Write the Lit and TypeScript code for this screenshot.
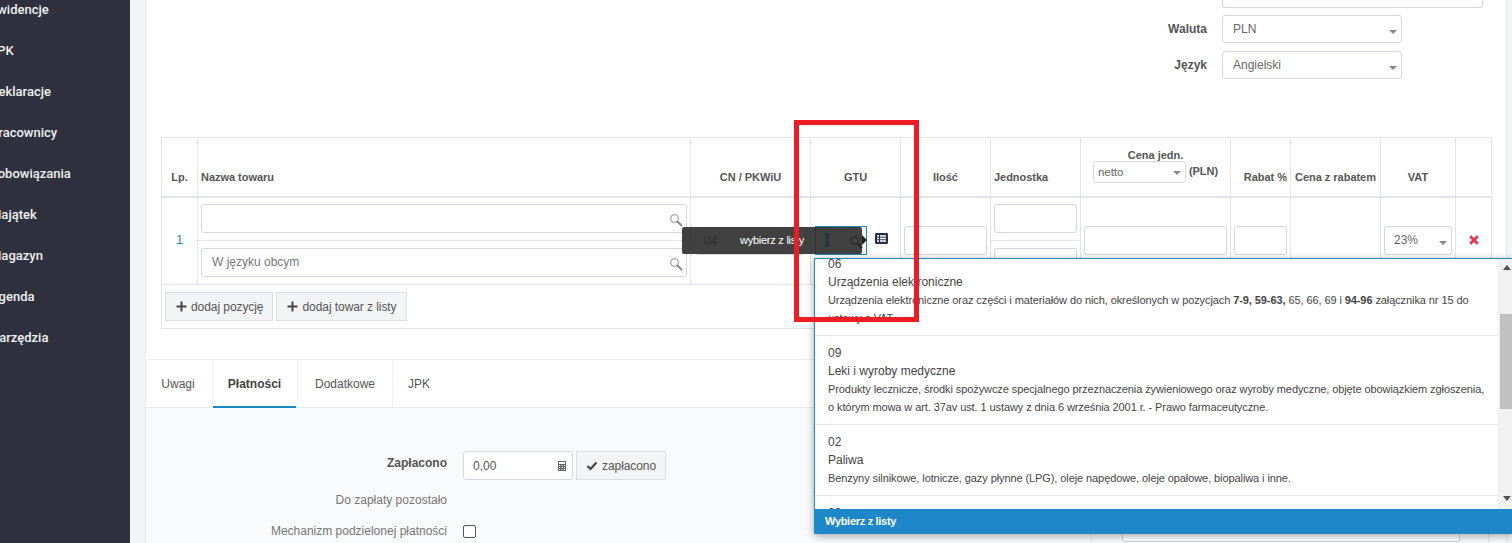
import { LitElement, html, css } from "lit";
import { customElement } from "lit/decorators.js";

const search = html`<svg class="search" viewBox="0 0 14 14" width="14" height="14"><circle cx="5.500" cy="5.500" r="3.800" fill="none" stroke="#aaa" stroke-width="1.300"/><path d="M8.500 8.500L12.500 12.500" stroke="#8a8a8a" stroke-width="2" stroke-linecap="round"/></svg>`;

@customElement("app-root")
export class AppRoot extends LitElement {
  static styles = css`
    :host { display: block; width: 1512px; height: 543px; overflow: hidden; position: relative; font-family: "Liberation Sans", Arial, sans-serif; font-size: 12px; color: #555; background: #f3f4f6; }
    * { box-sizing: border-box; }
    .shell { display: flex; height: 543px; overflow: hidden; }
    .side { width: 130px; flex: none; background: #2f323e; font-family: "Roboto", sans-serif; font-size: 13px; font-weight: 500; display: flex; flex-direction: column; overflow: hidden; padding-top: 1px; }
    .side div { height: 41px; line-height: 18px; white-space: nowrap; flex: none; margin-left: -10px; color: #eef0f3; }
    .gutter { width: 15px; flex: none; }
    .main { width: 1362px; flex: none; background: #fff; border-left: 1px solid #e6e8ec; border-right: 1px solid #e6e8ec; height: 543px; overflow: hidden; position: relative; }
    .head { height: 137px; display: flex; flex-direction: column; align-items: flex-start; padding-left: 1008px; }
    .field { display: flex; align-items: center; margin-bottom: 8px; }
    .f0 { height: 8px; margin-left: 68px; width: 261px; border: 1px solid #d5d8dd; border-top: none; border-radius: 0 0 3px 3px; margin-bottom: 7px; }
    .field label { width: 55px; text-align: right; margin-right: 15px; margin-left: -2px; font-weight: 700; color: #555; font-size: 12px; }
    .select { position: relative; border: 1px solid #d5d8dd; border-radius: 3px; background: #fff; color: #666; font-size: 12px; display: flex; align-items: center; }
    .select::after { content: ""; position: absolute; right: 4px; top: 14px; border: 4px solid transparent; border-top-color: #888; }
    .sel-head { width: 180px; height: 28px; padding: 0 10px 1px; }
    table { border-collapse: collapse; table-layout: fixed; width: 1330px; margin-left: 15px; font-size: 11px; }
    th, td { border: 1px solid #e2e4e9; padding: 0; }
    th { height: 59px; border-bottom-width: 2px; vertical-align: bottom; padding-bottom: 13px; font-weight: 700; color: #555; text-align: center; letter-spacing: -0.03px; }
    th.l { text-align: left; padding-left: 3px; }
    th.rab { text-align: right; padding-right: 3px; }
    td { text-align: center; vertical-align: middle; }
    tr.r td { height: 44px; }
    .input { position: relative; border: 1px solid #d5d8dd; border-radius: 3px; background: #fff; height: 29px; margin: 0 3px; text-align: left; padding: 0 10px 2px; display: flex; align-items: center; color: #777; font-size: 12px; }
    .cn { margin: 0 4px; height: 28px; padding: 0 8px; color: #333; }
    .search { position: absolute; right: 3px; top: 8px; }
    .lp { color: #1c7fc4; font-size: 12px; padding-bottom: 2px; }
    .mini { display: inline-flex; width: 93px; height: 22px; padding: 0 4px; font-size: 11.500px; font-weight: 400; vertical-align: middle; margin-right: 3px; }
    .mini::after { top: 9px; }
    .vat { margin: 0 3px; width: 68px; height: 29px; padding: 0 9px 2px; font-size: 12px; }
    .cenah { padding-bottom: 13px; }
    .cenah > div:first-child { line-height: 12px; }
    .del { display: block; margin: -2px auto 0; }
    .foot { padding: 7px 3px; text-align: left; height: 44px; }
    .btn { display: inline-flex; align-items: center; gap: 4px; height: 29px; padding: 0 9px 0 10px; border: 1px solid #dcdee2; background: #f3f4f6; color: #555; font-size: 12px; margin-right: 3px; white-space: nowrap; letter-spacing: -0.07px; }
    .btn svg { flex: none; }
    .tabs { margin-top: 30px; height: 49px; border-top: 1px solid #eef0f2; border-bottom: 1px solid #e6e8ec; display: flex; }
    .tab { height: 47px; display: flex; align-items: center; justify-content: center; font-size: 12px; color: #555; flex: none; }
    .t-u { width: 67px; border-right: 1px solid #eef0f2; padding-right: 2px; }
    .t-p { width: 83px; margin-right: 1px; color: #444; font-weight: 700; border-bottom: 2px solid #1e87c9; height: 48px; padding-top: 1px; }
    .t-d { width: 96px; border-left: 1px solid #eef0f2; border-right: 1px solid #eef0f2; }
    .t-j { width: 52px; }
    .panel { background: #f9fafc; height: 135px; display: flex; }
    .pleft { width: 945px; flex: none; padding-top: 43px; }
    .pright { width: 398px; flex: none; border-left: 1px solid #e6e8ec; border-right: 1px solid #e6e8ec; padding-left: 30px; }
    .pbox { width: 338px; height: 134px; border: 1px solid #cfd2d6; background: #fff; border-radius: 0 0 2px 2px; }
    .row { display: flex; align-items: center; }
    .row label { width: 301px; text-align: right; margin-right: 16px; color: #777; font-size: 12px; line-height: 14px; }
    .row label.b { font-weight: 700; color: #555; margin-bottom: 6px; }
    .pay { width: 110px; height: 29px; border: 1px solid #d5d8dd; border-radius: 3px; background: #fff; display: flex; align-items: center; justify-content: space-between; padding: 0 6px 0 9px; color: #555; font-size: 12px; }
    .paybtn { margin-left: 3px; width: 90px; padding: 0 9px; gap: 4px; }
    .check { width: 13px; height: 13px; border: 1px solid #555; border-radius: 2px; background: #fff; }
    .r2 { margin-top: 13px; }
    .r3 { margin-top: 17px; }
    .tip { position: absolute; left: 682px; top: 227px; width: 180px; height: 27px; background: rgba(44,44,44,.9); border-radius: 2px; color: #fff; font-size: 11px; letter-spacing: -0.25px; display: flex; align-items: center; padding: 0 0 1px 58px; z-index: 3; }
    .tip::after { content: ""; position: absolute; left: 100%; top: 8px; border: 5px solid transparent; border-left-color: #222; border-right-width: 0; }
    .dd { position: absolute; left: 814px; top: 258px; width: 698px; height: 276px; background: #fff; border-top: 1px solid #1e87c9; border-left: 1px solid #1e87c9; box-shadow: 0 2px 8px rgba(0,0,0,.35); z-index: 4; display: flex; flex-direction: column; overflow: hidden; }
    .list { flex: 1; overflow: hidden; position: relative; min-height: 0; }
    .scroller { margin-top: -4px; padding-right: 14px; }
    .item { padding: 0 12px 0 13px; border-bottom: 1px solid #e6e8ec; font-size: 11px; letter-spacing: -0.09px; color: #444; }
    .item div { height: 18px; line-height: 18px; white-space: nowrap; }
    .item .t, .item .n { font-size: 12px; letter-spacing: 0; }
    .i1 { height: 81px; }
    .i2 { height: 89px; padding-top: 8px; }
    .i3 { height: 71px; padding-top: 8px; }
    .i4 { height: 60px; padding-top: 8px; }
    .ddf { flex: none; height: 25px; background: #1e87c9; color: #fff; font-weight: 700; font-size: 11px; letter-spacing: -0.3px; display: flex; align-items: center; padding: 0 0 2px 10px; }
    .sb { position: absolute; top: 0; right: 0; width: 14px; bottom: 0; background: #f1f1f1; z-index: 5; }
    .thumb { position: absolute; top: 55px; left: 2px; right: 0; height: 95px; background: #c1c1c1; }
    .up, .down { position: absolute; left: 5px; width: 0; height: 0; border: 4px solid transparent; }
    .up { top: 6px; border-bottom: 5px solid #505050; border-top-width: 0; }
    .down { bottom: 8px; border-top: 5px solid #505050; border-bottom-width: 0; }
    .red { position: absolute; left: 794px; top: 120px; width: 125px; height: 202px; border: 5px solid #ed1c24; z-index: 6; }
    .ico { position: absolute; left: 875px; top: 233px; z-index: 2; }
    .gtu { position: relative; height: 29px; margin: 0 0 0 4px; border: 1px solid #1e87c9; width: 52px; background: #fff; }
    .gtu .search circle { stroke: #222; }
    .gtu .search path { stroke: #111; }
    .cursor { position: absolute; left: 9px; top: 6px; width: 4px; height: 14px; background: linear-gradient(#26344c 46%, #3a3a3a 46% 54%, #26344c 54%); z-index: 4; }
  `;

  render() {
    const side = ["Ewidencje", "JPK", "Deklaracje", "Pracownicy", "Zobowiązania", "Majątek", "Magazyn", "Agenda", "Narzędzia"];
    const plus = html`<svg width="11" height="11" viewBox="0 0 11 11"><path d="M5.500 0.500v10M0.500 5.500h10" stroke="#444" stroke-width="2"/></svg>`;
    return html`
      <div class="shell">
        <nav class="side">
          ${side.map((s) => html`<div>${s}</div>`)}
        </nav>
        <div class="gutter"></div>
        <main class="main">
          <div class="head">
            <div class="f0"></div>
            <div class="field"><label>Waluta</label><div class="select sel-head">PLN</div></div>
            <div class="field"><label>Język</label><div class="select sel-head">Angielski</div></div>
          </div>
          <table>
            <colgroup>
              <col style="width:36px"/><col style="width:493px"/><col style="width:120px"/><col style="width:90px"/><col style="width:90px"/><col style="width:90px"/><col style="width:150px"/><col style="width:60px"/><col style="width:90px"/><col style="width:75px"/><col style="width:36px"/>
            </colgroup>
            <tr>
              <th>Lp.</th><th class="l">Nazwa towaru</th><th>CN / PKWiU</th><th>GTU</th><th>Ilość</th><th class="l">Jednostka</th>
              <th class="cenah"><div>Cena jedn.</div><div class="select mini">netto</div>(PLN)</th>
              <th class="rab">Rabat %</th><th>Cena z rabatem</th><th>VAT</th><th></th>
            </tr>
            <tr class="r">
              <td rowspan="2" class="lp">1</td>
              <td><div class="input">${search}</div></td>
              <td rowspan="2"><div class="input cn">04</div></td>
              <td rowspan="2"><div class="gtu"><i class="cursor"></i>${search}</div></td>
              <td rowspan="2"><div class="input"></div></td>
              <td><div class="input"></div></td>
              <td rowspan="2"><div class="input"></div></td>
              <td rowspan="2"><div class="input"></div></td>
              <td rowspan="2"></td>
              <td rowspan="2"><div class="select vat">23%</div></td>
              <td rowspan="2"><svg class="del" width="10" height="10" viewBox="0 0 10 10"><path d="M1.200 1.200l7.600 7.600M8.800 1.200l-7.600 7.600" stroke="#e03a4e" stroke-width="2.800"/></svg></td>
            </tr>
            <tr class="r">
              <td><div class="input">W języku obcym${search}</div></td>
              <td><div class="input"></div></td>
            </tr>
            <tr>
              <td colspan="11" class="foot">
                <span class="btn">${plus}dodaj pozycję</span><span class="btn">${plus}dodaj towar z listy</span>
              </td>
            </tr>
          </table>
          <div class="tabs">
            <div class="tab t-u">Uwagi</div>
            <div class="tab t-p">Płatności</div>
            <div class="tab t-d">Dodatkowe</div>
            <div class="tab t-j">JPK</div>
          </div>
          <div class="panel">
            <div class="pleft">
              <div class="row"><label class="b">Zapłacono</label><div class="pay">0,00
                <svg width="8" height="10" viewBox="0 0 8 10"><path fill="#666" d="M0 0h8v10H0zM1 1v2h6V1zM1 4v1h1V4zm2.500 0v1h1V4zM6 4v1h1V4zM1 6v1h1V6zm2.500 0v1h1V6zM6 6v1h1V6zM1 8v1h1V8zm2.500 0v1h1V8zM6 8v1h1V8z" fill-rule="evenodd"/></svg></div>
                <span class="btn paybtn"><svg width="12" height="10" viewBox="0 0 12 10"><path d="M1.500 5l3 3 6-6.500" fill="none" stroke="#444" stroke-width="2.200"/></svg>zapłacono</span></div>
              <div class="row r2"><label>Do zapłaty pozostało</label></div>
              <div class="row r3"><label>Mechanizm podzielonej płatności</label><div class="check"></div></div>
            </div>
            <div class="pright"><div class="pbox"></div></div>
          </div>
        </main>
      </div>
      <svg class="ico" width="13" height="11" viewBox="0 0 13 12" preserveAspectRatio="none"><path fill="#27304a" fill-rule="evenodd" d="M1.500 0h10A1.500 1.500 0 0 1 13 1.500v9a1.500 1.500 0 0 1-1.500 1.500h-10A1.500 1.500 0 0 1 0 10.500v-9A1.500 1.500 0 0 1 1.500 0zM2 2.500v1.500h2V2.500zm3 0v1.500h6V2.500zM2 5.200v1.500h2V5.200zm3 0v1.500h6V5.200zM2 8v1.500h2V8zm3 0v1.500h6V8z"/></svg>
      <div class="tip">wybierz z listy</div>
      <div class="dd">
        <div class="list">
          <div class="scroller">
            <div class="item i1"><div class="n">06</div><div class="t">Urządzenia elektroniczne</div><div>Urządzenia elektroniczne oraz części i materiałów do nich, określonych w pozycjach <b>7-9, 59-63,</b> 65, 66, 69 i <b>94-96</b> załącznika nr 15 do</div><div>ustawy o VAT.</div></div>
            <div class="item i2"><div class="n">09</div><div class="t">Leki i wyroby medyczne</div><div>Produkty lecznicze, środki spożywcze specjalnego przeznaczenia żywieniowego oraz wyroby medyczne, objęte obowiązkiem zgłoszenia,</div><div>o którym mowa w art. 37av ust. 1 ustawy z dnia 6 września 2001 r. - Prawo farmaceutyczne.</div></div>
            <div class="item i3"><div class="n">02</div><div class="t">Paliwa</div><div>Benzyny silnikowe, lotnicze, gazy płynne (LPG), oleje napędowe, oleje opałowe, biopaliwa i inne.</div></div>
            <div class="item i4"><div class="n">03</div></div>
          </div>
          <div class="sb"><i class="up"></i><div class="thumb"></div><i class="down"></i></div>
        </div>
        <div class="ddf">Wybierz z listy</div>
      </div>
      <div class="red"></div>
    `;
  }
}
